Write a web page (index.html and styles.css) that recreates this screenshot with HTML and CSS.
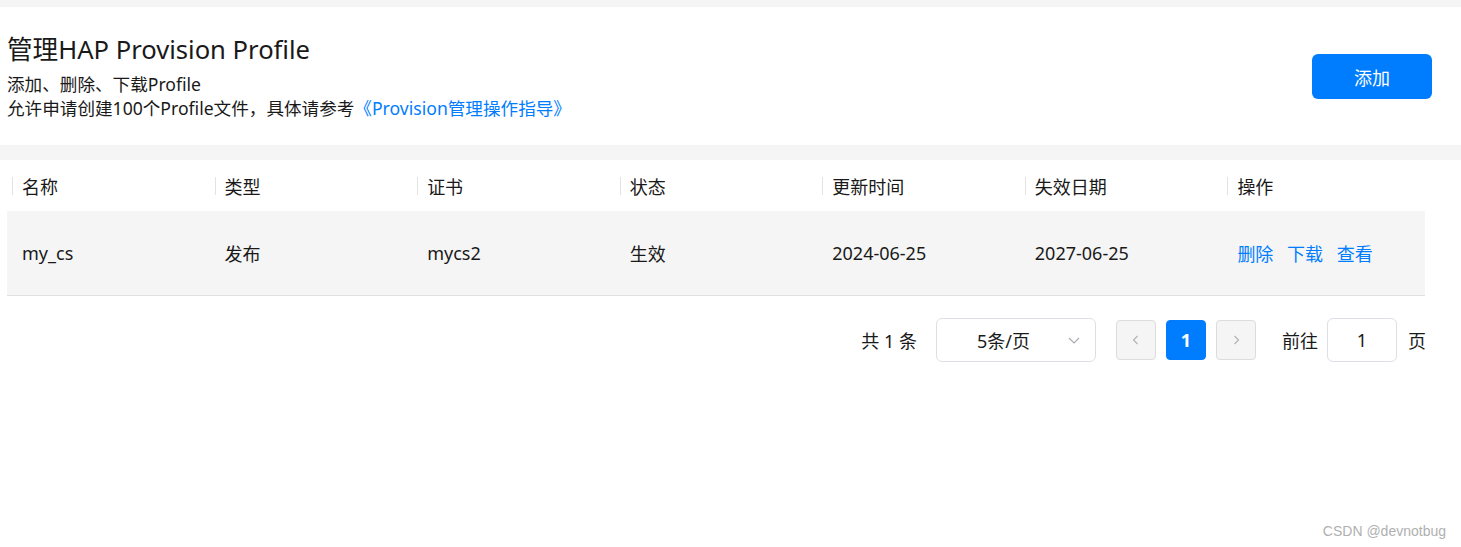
FILE: index.html
```html
<!DOCTYPE html>
<html lang="zh-CN">

<head>
    <meta charset="UTF-8">
    <meta name="viewport" content="width=device-width, initial-scale=1.0">
    <title>管理HAP Provision Profile</title>
    <link rel="stylesheet" href="styles.css">
</head>

<body>
    <div class="pagina">
        <div class="cabecalho">
            <div class="info">
                <h1>管理HAP Provision Profile</h1>
                <p>添加、删除、下载Profile</p>
                <p>允许申请创建100个Profile文件，具体请参考<a href="#">《Provision管理操作指导》</a></p>
            </div>
            <button class="btn-add">添加</button>
        </div>

        <div class="conteudo">
            <table class="tabela">
                <thead>
                    <tr>
                        <th>名称</th>
                        <th>类型</th>
                        <th>证书</th>
                        <th>状态</th>
                        <th>更新时间</th>
                        <th>失效日期</th>
                        <th>操作</th>
                    </tr>
                </thead>
                <tbody>
                    <tr>
                        <td>my_cs</td>
                        <td>发布</td>
                        <td>mycs2</td>
                        <td>生效</td>
                        <td>2024-06-25</td>
                        <td>2027-06-25</td>
                        <td class="acoes">
                            <a href="#">删除</a>
                            <a href="#">下载</a>
                            <a href="#">查看</a>
                        </td>
                    </tr>
                </tbody>
            </table>

            <div class="paginacao">
                <span class="total">共 1 条</span>
                <div class="seletor">
                    <span>5条/页</span>
                    <svg class="seta" width="14" height="14" viewBox="0 0 14 14">
                        <path d="M2 5l5 5 5-5" fill="none" stroke="#a8abb2" stroke-width="1.2" />
                    </svg>
                </div>
                <div class="paginas">
                    <button class="pg">
                        <svg width="12" height="12" viewBox="0 0 12 12">
                            <path d="M7.5 2L3.5 6l4 4" fill="none" stroke="#b0b0b0" stroke-width="1.1" />
                        </svg>
                    </button>
                    <button class="pg ativo">1</button>
                    <button class="pg">
                        <svg width="12" height="12" viewBox="0 0 12 12">
                            <path d="M4.5 2l4 4-4 4" fill="none" stroke="#b0b0b0" stroke-width="1.1" />
                        </svg>
                    </button>
                </div>
                <span class="ir">前往</span>
                <div class="campo">1</div>
                <span class="ir-fim">页</span>
            </div>
        </div>
    </div>
    <div class="marca">CSDN @devnotbug</div>
</body>

</html>
```

FILE: styles.css
```css
* {
    margin: 0;
    padding: 0;
    box-sizing: border-box;
    font-family: "Noto Sans", "Noto Sans CJK SC", sans-serif;
}

body {
    background: #fff;
    color: #191919;
    height: 547px;
    overflow: hidden;
}

.pagina {
    border-top: 7px solid #f5f5f5;
}

.cabecalho {
    display: flex;
    align-items: center;
    justify-content: space-between;
    padding: 26px 29px 25px 7px;
    border-bottom: 15px solid #f5f5f5;
}

.info h1 {
    font-size: 25.6px;
    font-weight: normal;
    line-height: 34px;
    margin-bottom: 5px;
}

.info p {
    font-size: 17.6px;
    line-height: 24px;
}

.info a {
    color: #007dff;
    text-decoration: none;
}

.btn-add {
    width: 120px;
    height: 45px;
    border: none;
    border-radius: 6px;
    background: #007dff;
    color: #fff;
    font-size: 18px;
    cursor: pointer;
}

.conteudo {
    padding: 0 36px 0 7px;
}

.tabela {
    width: 1418px;
    border-collapse: collapse;
    table-layout: fixed;
    font-size: 18px;
}

.tabela th {
    position: relative;
    height: 51px;
    text-align: left;
    font-weight: normal;
    padding-left: 15px;
}

.tabela th::before {
    content: "";
    position: absolute;
    left: 5px;
    top: 17px;
    height: 18px;
    border-left: 1px solid #e3e3e3;
}

.tabela td {
    height: 84px;
    padding-left: 15px;
    background: #f5f5f5;
    border-bottom: 1px solid #e0e0e0;
}

.acoes a {
    color: #007dff;
    text-decoration: none;
    margin-right: 9px;
}

.paginacao {
    display: flex;
    align-items: center;
    justify-content: flex-end;
    margin-top: 22px;
    width: 1419px;
    font-size: 18px;
}

.total {
    margin-right: 19px;
}

.seletor {
    display: flex;
    align-items: center;
    justify-content: space-between;
    width: 160px;
    height: 44px;
    padding: 0 14px 0 40px;
    border: 1px solid #dcdfe6;
    border-radius: 6px;
}

.paginas {
    display: flex;
    gap: 10px;
    margin-left: 20px;
}

.pg {
    display: flex;
    align-items: center;
    justify-content: center;
    width: 40px;
    height: 40px;
    border: 1px solid #dcdcdc;
    border-radius: 4px;
    background: #f5f5f5;
    font-size: 18px;
    cursor: pointer;
}

.pg.ativo {
    background: #007dff;
    border-color: #007dff;
    color: #fff;
    font-weight: bold;
}

.ir {
    margin-left: 26px;
}

.campo {
    display: flex;
    align-items: center;
    justify-content: center;
    width: 70px;
    height: 44px;
    margin-left: 9px;
    border: 1px solid #dcdfe6;
    border-radius: 6px;
}

.ir-fim {
    margin-left: 11px;
}

.marca {
    position: absolute;
    right: 15px;
    bottom: 8px;
    font-family: "Liberation Sans", Arial, sans-serif;
    font-size: 14px;
    color: #b0b0b0;
}
```
